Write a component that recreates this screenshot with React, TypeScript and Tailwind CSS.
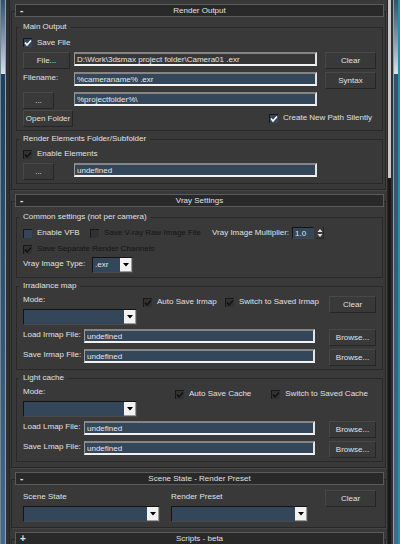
import React, { useId, useState } from "react";

function Rollout({ title, sign = "-", children }: { title: string; sign?: string; children?: React.ReactNode }) {
  return (
    <section className="my-[11px] border border-[#272727] shadow-[1px_1px_0_#444]">
      <h2 className="-mt-2 mr-px ml-[3px] bg-[#393939] pb-px">
        <button type="button" className="flex h-[13px] w-full items-center border border-[#5a5a5a] bg-[#292929] px-1 leading-[11px]">
          <span className="w-3 text-left text-[10px] font-bold text-[#e0e0e0]">{sign}</span>
          <span className="flex-1 pr-3 text-center">{title}</span>
        </button>
      </h2>
      <div className="pt-[3px] pr-0.5 pb-[3px] pl-1">{children}</div>
    </section>
  );
}

function Group({ title, children }: { title: string; children: React.ReactNode }) {
  return (
    <fieldset className="mb-0.5 min-w-0 border border-[#292929] px-1.5">
      <legend className="-ml-1 px-1 leading-3">{title}</legend>
      {children}
    </fieldset>
  );
}

function Check({ label, on = false, off = false, blue = false, dim = false }: { label: string; on?: boolean; off?: boolean; blue?: boolean; dim?: boolean }) {
  const [checked, setChecked] = useState(on);
  return (
    <label className={`flex items-center gap-[5px] whitespace-nowrap leading-3 ${dim ? "text-[#161616]" : ""}`}>
      <span className={`relative size-[9px] shrink-0 border-t border-l border-[#181818] ${blue ? "bg-[#34475a]" : "bg-[#323232]"}`}>
        <input
          type="checkbox"
          checked={checked}
          disabled={off}
          onChange={(e) => setChecked(e.target.checked)}
          className="absolute inset-0 size-full appearance-none"
        />
        {checked && (
          <svg viewBox="0 0 8 8" className={`pointer-events-none absolute inset-0 size-2 ${off ? "text-[#121212]" : "text-white"}`}>
            <path d="M1 3.5 3 6 7 1.5" fill="none" stroke="currentColor" strokeWidth="1.6" />
          </svg>
        )}
      </span>
      {label}
    </label>
  );
}

function Push({ children, className = "w-[47px]" }: { children: React.ReactNode; className?: string }) {
  return (
    <button
      type="button"
      className={`block h-[17px] shrink-0 border border-t-[#484848] border-r-[#262626] border-b-[#262626] border-l-[#484848] bg-[#393939] text-center leading-[15px] whitespace-nowrap ${className}`}
    >
      {children}
    </button>
  );
}

function Field({ value, label, dark = false, id }: { value: string; label: string; dark?: boolean; id?: string }) {
  return (
    <input
      id={id}
      aria-label={label}
      defaultValue={value}
      className={`h-[14px] w-0 min-w-0 flex-1 border-t-2 border-r-2 border-b-2 border-l border-t-[#858585] border-r-[#e4e4e4] border-b-[#f2f2f2] border-l-[#9a9a9a] px-0.5 leading-[10px] text-[#e4e4e4] outline-none ${dark ? "bg-[#363636]" : "bg-[#34475a]"}`}
    />
  );
}

function Drop({ label, value = "", id, className }: { label: string; value?: string; id?: string; className: string }) {
  return (
    <span className={`relative block h-4 border border-t-[#141414] border-r-[#4a4a4a] border-b-[#4a4a4a] border-l-[#141414] bg-[#34475a] ${className}`}>
      <select id={id} aria-label={label} className="block h-[14px] w-full appearance-none pl-0.5 leading-[14px] text-[#e4e4e4] outline-none">
        <option>{value}</option>
      </select>
      <span className="pointer-events-none absolute inset-y-0 right-0 flex w-3 items-center justify-center border-r border-b border-[#9a9a9a] bg-[#f2f2f2]">
        <svg viewBox="0 0 6 4" className="h-1 w-1.5">
          <path d="M0 0h6L3 3.6z" fill="#000" />
        </svg>
      </span>
    </span>
  );
}

function FileRow({ label }: { label: string }) {
  const id = useId();
  return (
    <div className="flex h-5 items-start">
      <label htmlFor={id} className="w-[61px] shrink-0 leading-3 whitespace-nowrap">
        {label}
      </label>
      <Field id={id} label={label} value="undefined" />
      <div className="w-[14px] shrink-0" />
      <Push>Browse...</Push>
    </div>
  );
}

function ModeSelect() {
  const id = useId();
  return (
    <div className="flex w-[114px] shrink-0 flex-col gap-0.5 pt-px">
      <label htmlFor={id} className="leading-[14px]">
        Mode:
      </label>
      <Drop id={id} label="Mode" className="w-full" />
    </div>
  );
}

export default function App() {
  return (
    <div className="flex h-screen overflow-hidden bg-[#393939] font-['Liberation_Sans',sans-serif] text-[8px] text-[#e0e0e0]">
      <div className="flex w-2.5 shrink-0 border-r border-[#262626] bg-[#303030]">
        <div className="flex w-1.5 flex-col border-r border-l border-r-[#8ba3b5] border-l-[#6f8796]">
          <div className="h-[74px] bg-linear-to-b from-[#34506c] via-[#8294a8] to-[#dce0ea]" />
          <div className="flex-1 bg-linear-to-b from-[#213f5c] to-[#48678c]" />
        </div>
      </div>

      <main className="min-w-0 flex-1 px-px">
        <Rollout title="Render Output">
          <Group title="Main Output">
            <div className="flex h-[19px] items-center">
              <Check label="Save File" on blue />
            </div>
            <div className="flex h-5">
              <div className="w-[51px] shrink-0">
                <Push>File...</Push>
              </div>
              <Field label="Output file" value="D:\Work\3dsmax project folder\Camera01 .exr" dark />
              <div className="w-2 shrink-0" />
              <Push className="w-[51px]">Clear</Push>
            </div>
            <div className="flex h-5">
              <label htmlFor="filename" className="w-[51px] shrink-0 leading-3">
                Filename:
              </label>
              <Field id="filename" label="Filename" value="%cameraname% .exr" />
              <div className="w-2 shrink-0" />
              <Push className="w-[51px]">Syntax</Push>
            </div>
            <div className="flex h-[18px]">
              <div className="w-[51px] shrink-0">
                <Push className="w-[31px]">...</Push>
              </div>
              <Field label="Project folder" value="%projectfolder%\" />
              <div className="w-[59px] shrink-0" />
            </div>
            <div className="flex h-5 items-start justify-between">
              <Push className="w-[50px]">Open Folder</Push>
              <div className="pt-0.5 pr-1">
                <Check label="Create New Path Silently" on blue />
              </div>
            </div>
          </Group>
          <Group title="Render Elements Folder/Subfolder">
            <div className="flex h-[18px] items-center">
              <Check label="Enable Elements" on off />
            </div>
            <div className="flex h-5">
              <div className="w-[51px] shrink-0">
                <Push className="w-[31px]">...</Push>
              </div>
              <Field label="Elements folder" value="undefined" />
              <div className="w-[59px] shrink-0" />
            </div>
          </Group>
        </Rollout>

        <Rollout title="Vray Settings">
          <Group title="Common settings (not per camera)">
            <div className="flex h-5 items-center">
              <div className="w-[67px] shrink-0">
                <Check label="Enable VFB" blue />
              </div>
              <div className="w-[122px] shrink-0">
                <Check label="Save V-ray Raw Image File" off dim />
              </div>
              <label htmlFor="multiplier" className="w-20 shrink-0 whitespace-nowrap">
                Vray Image Multiplier:
              </label>
              <input
                id="multiplier"
                defaultValue="1.0"
                className="h-3 w-[22px] border border-t-[#141414] border-r-[#454545] border-b-[#454545] border-l-[#141414] bg-[#34475a] px-0.5 text-[8px] leading-[10px] text-[#e0e0e0]"
              />
              <button type="button" aria-label="Adjust multiplier" className="ml-0.5 flex h-3 w-2 items-center justify-center border-r border-b border-[#262626]">
                <svg viewBox="0 0 6 10" className="h-2.5 w-1.5">
                  <path d="M0.5 4 3 1l2.5 3zM0.5 6 3 9l2.5-3z" fill="#e0e0e0" />
                </svg>
              </button>
            </div>
            <div className="flex h-3 items-center">
              <Check label="Save Separate Render Channels" on off dim />
            </div>
            <div className="flex h-[22px] items-start pt-0.5">
              <label htmlFor="imgtype" className="w-[69px] shrink-0 leading-[14px] whitespace-nowrap">
                Vray Image Type:
              </label>
              <Drop id="imgtype" label="Vray Image Type" value=".exr" className="w-[41px]" />
            </div>
          </Group>
          <Group title="Irradiance map">
            <div className="flex h-[37px] items-start gap-1.5">
              <ModeSelect />
              <div className="flex flex-1 items-center justify-between pt-1 pr-1">
                <Check label="Auto Save Irmap" on off />
                <Check label="Switch to Saved Irmap" on off />
              </div>
              <div className="pt-1">
                <Push>Clear</Push>
              </div>
            </div>
            <FileRow label="Load Irmap File:" />
            <FileRow label="Save Irmap File:" />
          </Group>
          <Group title="Light cache">
            <div className="flex h-[37px] items-start justify-between">
              <ModeSelect />
              <div className="flex items-center gap-5 pt-1 pr-2">
                <Check label="Auto Save Cache" on off />
                <Check label="Switch to Saved Cache" on off />
              </div>
            </div>
            <FileRow label="Load Lmap File:" />
            <FileRow label="Save Lmap File:" />
          </Group>
        </Rollout>

        <Rollout title="Scene State - Render Preset">
          <div className="flex h-[35px] items-start gap-[11px] px-[7px] pt-px">
            <div className="flex w-[137px] flex-col gap-0.5">
              <label htmlFor="scene" className="leading-[14px]">
                Scene State
              </label>
              <Drop id="scene" label="Scene State" className="w-full" />
            </div>
            <div className="flex w-[137px] flex-col gap-0.5">
              <label htmlFor="preset" className="leading-[14px]">
                Render Preset
              </label>
              <Drop id="preset" label="Render Preset" className="w-full" />
            </div>
            <div className="ml-auto">
              <Push className="w-[51px]">Clear</Push>
            </div>
          </div>
        </Rollout>

        <Rollout title="Scripts - beta" sign="+" />
      </main>

      <div className="flex w-[13px] shrink-0 border-l border-[#262626] bg-[#303030]">
        <div className="w-[3px] bg-[#181818]">
          <div className="h-[178px] bg-[#c9c9c9]" />
        </div>
        <div className="ml-0.5 flex w-[7px] flex-col border-r-2 border-l border-r-[#2391ab] border-l-[#8ba3b5]">
          <div className="h-[74px] bg-linear-to-b from-[#34506c] via-[#8294a8] to-[#dce0ea]" />
          <div className="flex-1 bg-linear-to-b from-[#34506c] to-[#48678c]" />
        </div>
      </div>
    </div>
  );
}
